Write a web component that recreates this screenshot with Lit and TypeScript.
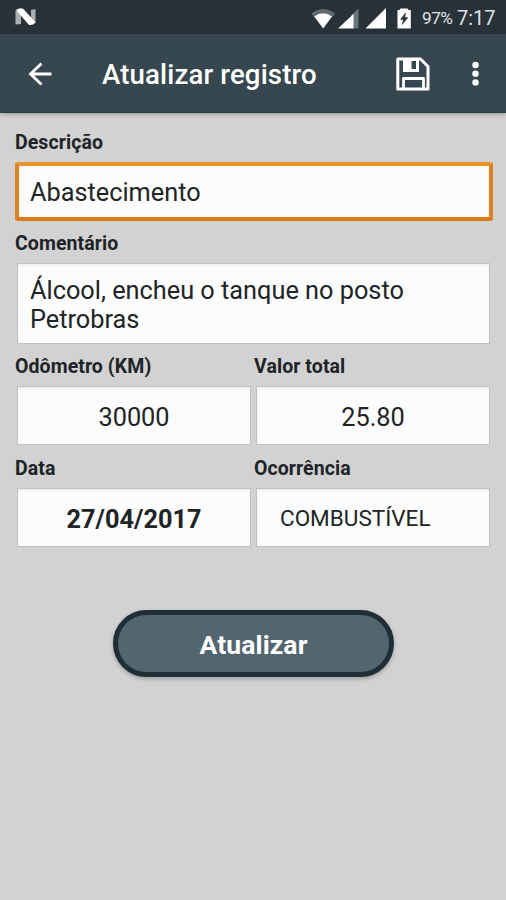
import { LitElement, html, css, svg } from "lit";
import { customElement } from "lit/decorators.js";

@customElement("status-bar")
class StatusBar extends LitElement {
  static styles = css`
    :host {
      display: flex;
      align-items: center;
      height: 34px;
      background: #283238;
      color: #dfe3e5;
      box-sizing: border-box;
      padding: 0 11px 0 15px;
    }
    .logo { width: 22px; height: 18px; margin-right: auto; }
    .icons { width: 102px; height: 22px; margin: 1px 9px 0 0; }
    .percent { font-size: 17.2px; width: 35px; line-height: 34px; padding-top: 2px; letter-spacing: -0.5px; white-space: nowrap; }
    .clock { font-size: 20px; width: 38px; line-height: 34px; padding-top: 2px; text-align: right; white-space: nowrap; }
  `;
  render() {
    return html`
      <svg class="logo" viewBox="0 0 22 18">
        <path d="M0.500 2L6 6V16L0.500 16.500Z" fill="#a9afb2" />
        <path d="M16 2L20.500 1V15.500L16 11Z" fill="#a9afb2" />
        <path d="M1 2Q5 -1 8.500 1L20.500 14.500Q18 17.500 14 17Z" fill="#fff" />
      </svg>
      <svg class="icons" viewBox="0 0 102 22">
        <path d="M0.500 6.500Q12 -2.500 24 6.500L21 10.500Q12 4.500 3.500 10.500Z" fill="#626b70" />
        <path d="M3.200 9.500Q12 3 21 9.500L12.200 21.500Z" fill="#fff" />
        <path d="M47.500 1.500V21.500H40V8.500Z" fill="#68757b" />
        <path d="M42.500 7V21.500H27Z" fill="#fff" />
        <path d="M75 1V21.500H54.500Z" fill="#fff" />
        <path d="M86.500 3H88.500L89.500 1.500H96.500L97.500 3H99.800V21.500H86.500Z" fill="#fff" />
        <path d="M94.500 6L89.500 12.500H92.400L91.200 17.500L97 10.500H93.800Z" fill="#273138" stroke="#273138" stroke-width="0.500" />
      </svg>
      <span class="percent">97%</span>
      <span class="clock">7:17</span>
    `;
  }
}

@customElement("app-toolbar")
class AppToolbar extends LitElement {
  static styles = css`
    :host {
      display: flex;
      align-items: center;
      height: 79px;
      box-sizing: border-box;
      padding: 1px 27px 0 28px;
      background: #37474f;
      border-bottom: 1px solid #2c3a41;
      box-shadow: 0 1px 5px rgba(0, 0, 0, 0.3);
      color: #fff;
    }
    .back { width: 24px; height: 24px; margin-right: 50px; }
    .title { flex: 1; margin: 3px 0 0; font-size: 27.6px; font-weight: 500; line-height: 34px; white-space: nowrap; letter-spacing: 0.14px; }
    .save { width: 34px; height: 34px; margin-right: 42px; }
    .more { width: 7px; height: 26px; }
  `;
  render() {
    return html`
      <svg class="back" viewBox="0 0 24 24">
        <path d="M23.500 12H3M13.500 1.500L2.500 12L13.500 22.500" fill="none" stroke="#fff" stroke-width="2.800" />
      </svg>
      <h1 class="title">Atualizar registro</h1>
      <svg class="save" viewBox="0 0 34 34">
        <path d="M1.800 2H24.500L32 9.500V32H1.800Z" fill="none" stroke="#fff" stroke-width="3" stroke-linejoin="round" />
        <path fill-rule="evenodd" d="M7 1H23V15H7ZM15.500 4V12H20V4Z" fill="#fff" />
        <path d="M7.500 32V21.500H27.500V32" fill="none" stroke="#fff" stroke-width="2.800" stroke-linejoin="round" />
      </svg>
      <svg class="more" viewBox="0 0 7 26">
        ${[4, 12.7, 21.4].map((y) => svg`<circle cx="3.500" cy=${y} r="3.200" fill="#fff" />`)}
      </svg>
    `;
  }
}

@customElement("form-field")
class FormField extends LitElement {
  static properties = {
    label: {},
    value: {},
    kind: {},
  };
  declare label: string;
  declare value: string;
  declare kind: string;

  static styles = css`
    :host { display: block; min-width: 0; }
    .label { height: 23px; line-height: 23px; font-size: 19.5px; font-weight: 700; color: #1d2428; white-space: nowrap; letter-spacing: 0.08px; }
    .box {
      box-sizing: border-box;
      display: flex;
      align-items: center;
      height: 59px;
      margin: 8px 2px 0;
      padding: 4px 12px 0;
      background: #fcfcfc;
      border: 1px solid #c0c1c2;
      box-shadow: inset 0 2px 2px #eeefef;
      font-size: 25.3px;
      line-height: 29.5px;
      color: #202426;
    }
    .focused {
      margin: 8px -1px 0 0;
      padding: 3px 11px 0;
      border: 4px solid;
      border-color: #e6942d #db8324 #da7b18 #db8324;
      border-radius: 3px;
      box-shadow: inset 0 0 2px #ffe2b0;
    }
    .multiline { height: 81px; padding-top: 3px; white-space: pre-line; }
    .centered { justify-content: center; }
    .date { justify-content: center; font-weight: 700; }
    .choice { font-size: 22.5px; padding: 2px 0 0 23px; }
  `;
  render() {
    return html`
      <div class="label">${this.label}</div>
      <div class="box ${this.kind}"><span class="text">${this.value}</span></div>
    `;
  }
}

@customElement("app-root")
class AppRoot extends LitElement {
  static styles = css`
    :host {
      display: flex;
      flex-direction: column;
      height: 900px;
      background: #d2d2d2;
      font-family: Roboto, sans-serif;
      overflow: hidden;
    }
    .form { display: flex; flex-direction: column; gap: 11px; padding: 18px 14px 0 15px; }
    .row { display: grid; grid-template-columns: 238px 238px; gap: 1px; }
    .row + .row { margin-top: 1px; }
    .submit {
      align-self: center;
      box-sizing: border-box;
      width: 281px;
      height: 67px;
      margin: 63px 0 0 1px;
      padding: 2px 0 0;
      border: 5px solid #202f36;
      border-radius: 34px;
      background: #53656f;
      box-shadow: 0 2px 4px rgba(0, 0, 0, 0.25);
      color: #fff;
      font: 700 26.500px Roboto, sans-serif;
      letter-spacing: 0.1px;
    }
  `;
  render() {
    return html`
      <status-bar></status-bar>
      <app-toolbar></app-toolbar>
      <main class="form">
        <form-field label="Descrição" value="Abastecimento" kind="focused"></form-field>
        <form-field label="Comentário" value=${"Álcool, encheu o tanque no posto\nPetrobras"} kind="multiline"></form-field>
        <div class="row">
          <form-field label="Odômetro (KM)" value="30000" kind="centered"></form-field>
          <form-field label="Valor total" value="25.80" kind="centered"></form-field>
        </div>
        <div class="row">
          <form-field label="Data" value="27/04/2017" kind="date"></form-field>
          <form-field label="Ocorrência" value="COMBUSTÍVEL" kind="choice"></form-field>
        </div>
      </main>
      <button class="submit">Atualizar</button>
    `;
  }
}
